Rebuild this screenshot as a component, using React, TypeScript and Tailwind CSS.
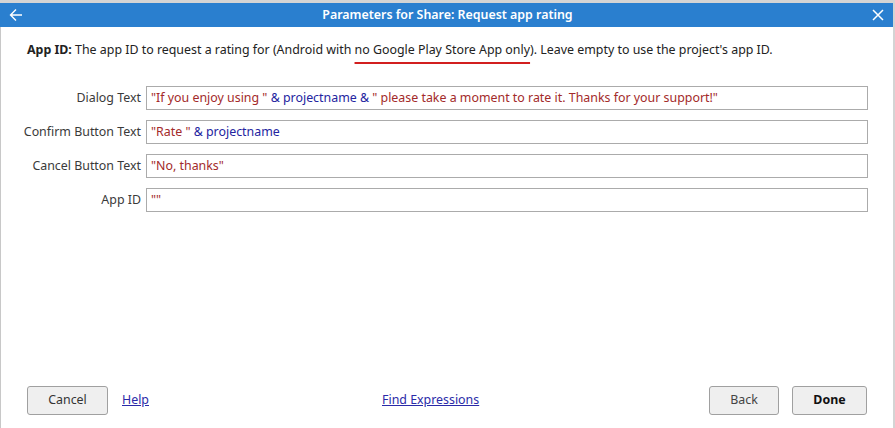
import React from "react";

const S = ({ children }: { children: React.ReactNode }) => (
  <span className="text-[#a32a2a]">{children}</span>
);
const B = ({ children }: { children: React.ReactNode }) => (
  <span className="text-[#2424a0]">{children}</span>
);

function Row({ label, children }: { label: string; children: React.ReactNode }) {
  return (
    <div className="flex items-center h-[24px]">
      <div className="w-[141px] text-right pr-[5px] text-[#3a3a3a]">{label}</div>
      <div className="w-[722px] h-[24px] border border-[#ababab] px-[4px] flex items-center whitespace-nowrap overflow-hidden">
        {children}
      </div>
    </div>
  );
}

export default function App() {
  return (
    <div
      className="w-[895px] h-[428px] bg-[#d4d4d4] pt-[3px] flex flex-col text-[12.4px] text-[#222]"
      style={{ fontFamily: '"Segoe UI", "Noto Sans", sans-serif' }}
    >
      <div className="w-[893px] h-[24px] bg-[#2a7fcf] flex items-center text-white">
        <svg width="14" height="14" viewBox="0 0 14 14" className="ml-[9px]">
          <path d="M13 7H1.5M7 1.5L1.5 7L7 12.5" stroke="white" strokeWidth="1.4" fill="none" />
        </svg>
        <div className="flex-1 text-center text-[12.4px] font-semibold">
          Parameters for Share: Request app rating
        </div>
        <svg width="12" height="12" viewBox="0 0 12 12" className="mr-[9px]">
          <path d="M1 1L11 11M11 1L1 11" stroke="white" strokeWidth="1.5" />
        </svg>
      </div>
      <div className="w-[893px] flex-1 bg-white ml-0 border-l border-[#c8c8c8] flex flex-col">
        <div className="pl-[26px] pt-[14px] h-[40px] whitespace-nowrap">
          <span className="font-bold">App ID:</span> The app ID to request a rating for (Android with{" "}
          <span className="underline decoration-[#d21f1f] decoration-2 underline-offset-[8px]">
            no Google Play Store App only
          </span>
          ). Leave empty to use the project's app ID.
        </div>
        <div className="flex flex-col gap-[10px] mt-[19px] pl-[4px]">
          <Row label="Dialog Text">
            <S>"If you enjoy using "</S>&nbsp;<B>&amp; projectname &amp;</B>&nbsp;
            <S>" please take a moment to rate it. Thanks for your support!"</S>
          </Row>
          <Row label="Confirm Button Text">
            <S>"Rate "</S>&nbsp;<B>&amp; projectname</B>
          </Row>
          <Row label="Cancel Button Text">
            <S>"No, thanks"</S>
          </Row>
          <Row label="App ID">
            <S>""</S>
          </Row>
        </div>
        <div className="flex-1" />
        <div className="flex items-center h-[29px] mb-[13px] pl-[26px] pr-[26px]">
          <button className="w-[81px] h-[29px] border border-[#a0a0a0] rounded-[3px] bg-[#efefef] text-[#333]">
            Cancel
          </button>
          <a className="ml-[14px] underline text-[#2a2aa8] cursor-pointer">Help</a>
          <a className="ml-[233px] underline text-[#2a2aa8] cursor-pointer">Find Expressions</a>
          <div className="flex-1" />
          <button className="w-[70px] h-[29px] border border-[#a0a0a0] rounded-[3px] bg-[#efefef] text-[#444]">
            Back
          </button>
          <button className="ml-[13px] w-[75px] h-[29px] border border-[#a0a0a0] rounded-[3px] bg-[#efefef] font-bold text-[#111]">
            Done
          </button>
        </div>
      </div>
    </div>
  );
}
